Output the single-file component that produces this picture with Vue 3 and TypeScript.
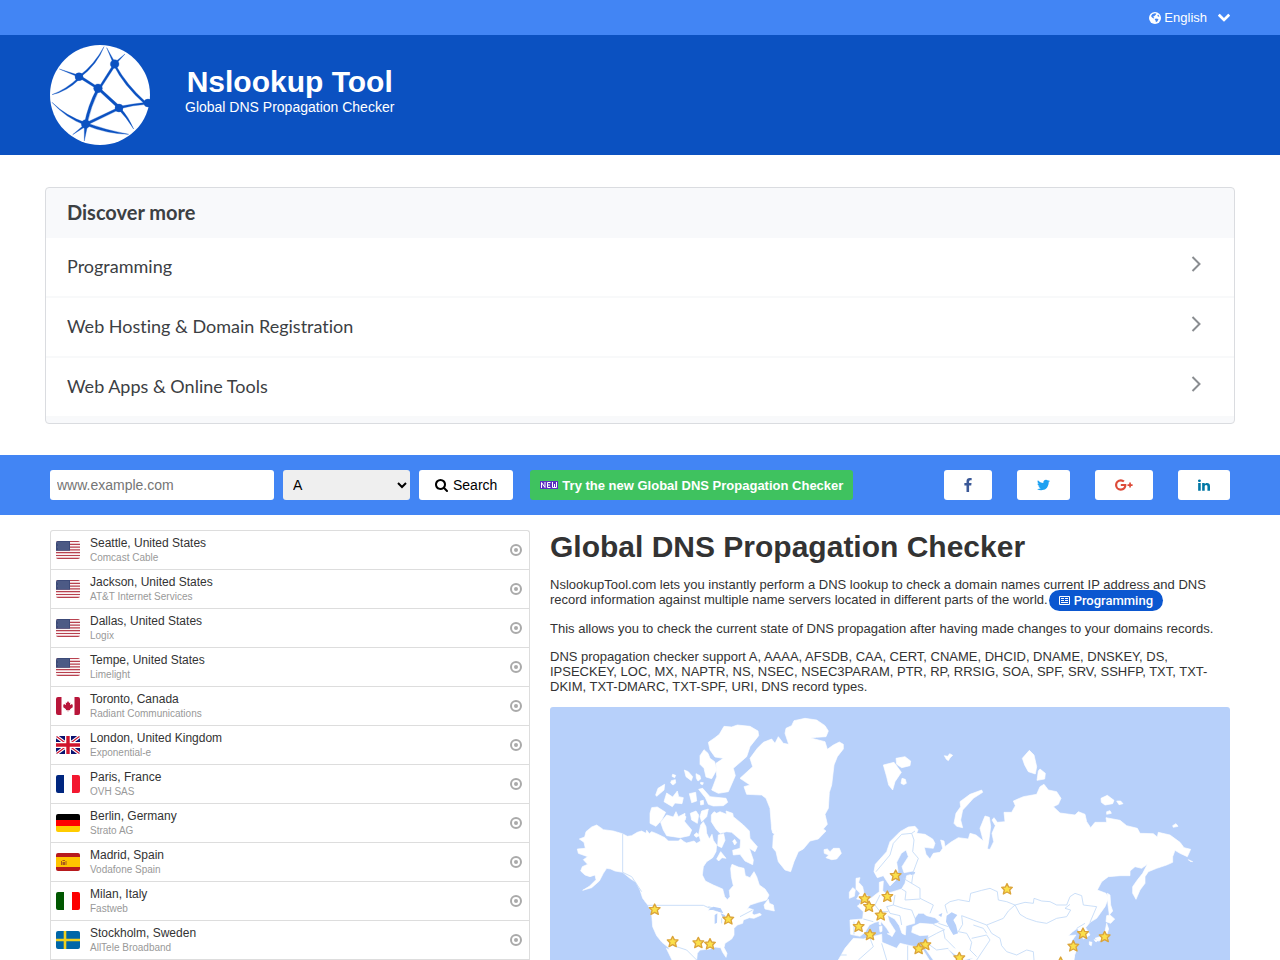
<script setup lang="ts">
import { ref } from 'vue'

interface Shape {
  d: string
  fill?: string
  stroke?: string
  width?: number
}
interface Server {
  city: string
  isp: string
  flag: string
}
interface Social {
  name: string
  color: string
  width: number
  box: string
  d: string
}

const domain = ref('')
const recordType = ref('A')
const recordTypes = ['A', 'AAAA', 'CAA', 'CNAME', 'MX', 'NS', 'PTR', 'SOA', 'SRV', 'TXT']
const topics = ['Programming', 'Web Hosting & Domain Registration', 'Web Apps & Online Tools']

const flags: Record<string, Shape[]> = {
  us: [
    { d: 'M0 0H24V18H0Z', fill: '#fbf3f4' },
    { d: 'M0 .5H24M0 3.300H24M0 6.100H24M0 8.900H24M0 11.700H24M0 14.500H24M0 17.300H24', stroke: '#b8414f', width: 1.2 },
    { d: 'M0 0H14V9.700H0Z', fill: '#3c4a78' },
    { d: 'M1 2H13M2 4H13M1 6H13M2 8H13', stroke: '#7481a6', width: 0.6 },
  ],
  ca: [
    { d: 'M0 0H24V18H0Z', fill: '#fff' },
    { d: 'M0 0H5.500V18H0ZM18.500 0H24V18H18.500Z', fill: '#b8163a' },
    { d: 'M12 4L13.200 6 14.300 5.500 13.900 8.300 15.500 7 16 7.800 17 7.600 16.500 9.300 17 10 14 12.300 14.200 13.200 12.300 12.900V14.500H11.700V12.900L9.800 13.200 10 12.300 7 10 7.500 9.300 7 7.600 8 7.800 8.500 7 10.100 8.300 9.700 5.500 10.800 6Z', fill: '#b8163a' },
  ],
  gb: [
    { d: 'M0 0H24V18H0Z', fill: '#0a1270' },
    { d: 'M0 0L24 18M24 0L0 18', stroke: '#fff', width: 3.4 },
    { d: 'M0 0L24 18M24 0L0 18', stroke: '#d0142c', width: 1.2 },
    { d: 'M12 0V18M0 9H24', stroke: '#fff', width: 6 },
    { d: 'M12 0V18M0 9H24', stroke: '#d0142c', width: 3.4 },
  ],
  fr: [
    { d: 'M0 0H8V18H0Z', fill: '#00267f' },
    { d: 'M8 0H16V18H8Z', fill: '#fff' },
    { d: 'M16 0H24V18H16Z', fill: '#f31830' },
  ],
  de: [
    { d: 'M0 0H24V6H0Z', fill: '#000' },
    { d: 'M0 6H24V12H0Z', fill: '#f00' },
    { d: 'M0 12H24V18H0Z', fill: '#fc0' },
  ],
  es: [
    { d: 'M0 0H24V18H0Z', fill: '#b71a1d' },
    { d: 'M0 4H24V14H0Z', fill: '#ffc400' },
    { d: 'M5 8h1v4H5zM9.500 8h1v4h-1zM6.500 7h2.500v1H6.500zM6.500 9h2.500v3H6.500z', fill: '#a8581c' },
  ],
  it: [
    { d: 'M0 0H8V18H0Z', fill: '#005700' },
    { d: 'M8 0H16V18H8Z', fill: '#fff' },
    { d: 'M16 0H24V18H16Z', fill: '#fc0000' },
  ],
  se: [
    { d: 'M0 0H24V18H0Z', fill: '#0066a8' },
    { d: 'M9 0V18M0 9H24', stroke: '#f0d020', width: 2.6 },
  ],
}

const servers: Server[] = [
  { city: 'Seattle, United States', isp: 'Comcast Cable', flag: 'us' },
  { city: 'Jackson, United States', isp: 'AT&T Internet Services', flag: 'us' },
  { city: 'Dallas, United States', isp: 'Logix', flag: 'us' },
  { city: 'Tempe, United States', isp: 'Limelight', flag: 'us' },
  { city: 'Toronto, Canada', isp: 'Radiant Communications', flag: 'ca' },
  { city: 'London, United Kingdom', isp: 'Exponential-e', flag: 'gb' },
  { city: 'Paris, France', isp: 'OVH SAS', flag: 'fr' },
  { city: 'Berlin, Germany', isp: 'Strato AG', flag: 'de' },
  { city: 'Madrid, Spain', isp: 'Vodafone Spain', flag: 'es' },
  { city: 'Milan, Italy', isp: 'Fastweb', flag: 'it' },
  { city: 'Stockholm, Sweden', isp: 'AllTele Broadband', flag: 'se' },
]

const socials: Social[] = [
  { name: 'Facebook', color: '#3b5998', width: 8, box: '479 0 864 1664', d: 'M1343 12v264h-157q-86 0-116 36t-30 108v189h293l-39 296h-254v759H734V905H479V609h255V391q0-186 104-288.500T1115 0q147 0 228 12z' },
  { name: 'Twitter', color: '#1da1f2', width: 13, box: '108 128 1576 1536', d: 'M1684 408q-67 98-162 167 1 14 1 42 0 130-38 259.500T1369.500 1125 1185 1335.500t-258 146-323 54.500q-271 0-496-145 35 4 78 4 225 0 401-138-105-2-188-64.500T285 1033q33 5 61 5 43 0 85-11-112-23-185.500-111.500T172 710v-4q68 38 146 41-66-44-105-115t-39-154q0-88 44-163 121 149 294.500 238.500T884 653q-8-38-8-74 0-134 94.500-228.500T1199 256q140 0 236 102 109-21 205-78-37 115-142 178 93-10 186-50z' },
  { name: 'Google Plus', color: '#dd4b39', width: 18, box: '0 0 18 12', d: 'M5.800 5V7.100H9.200C8.900 8.400 7.600 9.600 5.800 9.600A3.600 3.600 0 0 1 5.800 2.400C6.800 2.400 7.600 2.800 8.100 3.300L9.700 1.700A5.700 5.700 0 0 0 5.800 .2 5.800 5.800 0 0 0 5.800 11.800C9.200 11.800 11.400 9.400 11.400 6.100Q11.400 5.500 11.300 5ZM14.200 3.500V5.200H12.500V6.900H14.200V8.600H15.900V6.900H17.600V5.200H15.900V3.500Z' },
  { name: 'LinkedIn', color: '#0077a5', width: 12, box: '128 120 1536 1496', d: 'M477 625v991H147V625h330zm21-306q1 73-50.500 122T312 490h-2q-82 0-132-49t-50-122q0-74 51.500-122.500T314 148t133 48.500T498 319zm1166 729v568h-329v-530q0-105-40.500-164.500T1168 862q-63 0-105.500 34.500T999 982q-11 30-11 81v553H659q2-399 2-647t-1-296l-1-48h329v144h-2q20-32 41-56t56.500-52 87-43.500T1285 602q171 0 275 113.500t104 332.500z' },
]

const westLand: string[] = [
  // North America
  'M140 360L152 368 160 374 190 378 217 386 232 394 245 392 262 382 275 378 288 385 290 376 298 386 305 380 320 386 345 398 355 408 385 408 392 402 402 410 410 414 432 408 440 415 452 408 446 388 452 360 460 350 468 365 470 385 478 402 486 388 490 406 500 420 498 440 488 458 470 470 460 485 457 510 466 528 490 540 518 552 524 575 532 584 540 575 538 556 550 542 544 515 542 490 546 478 565 486 582 490 586 512 600 518 612 500 620 515 628 540 645 552 657 570 650 585 625 592 600 600 590 614 597 610 610 614 606 625 612 630 630 625 634 630 612 640 598 638 580 645 578 655 562 660 552 670 552 690 545 702 525 715 522 728 531 745 528 757 518 742 512 728 495 726 480 732 450 735 442 745 440 765H372L362 748 356 728 336 712 320 692 308 665 306 640 304 618 290 595 278 580 270 555 258 532 240 520 218 502 195 498 182 492 170 490 160 505 148 528 125 548 98 556 118 544 138 524 135 510 120 515 105 510 92 498 97 485 113 478 100 464 113 455 85 445 82 432 106 430 102 412 88 402 104 396 108 380 125 366Z',
  'M349 730L358 735 375 765H366Z',
  // Greenland
  'M705 85L708 70 725 62 732 47 765 40 800 45 825 62 835 78 828 95 800 97 782 99 825 110 832 133 850 120 868 111 880 118 880 132 862 155 852 180 845 240 838 262 835 310 825 328 832 358 820 372 828 378 805 402 780 408 760 432 745 440 732 470 722 500 705 495 685 470 678 440 668 428 670 392 680 378 665 372 660 310 648 280 635 270 590 268 582 245 600 240 570 220 608 185 600 160 622 130 640 112 665 102 675 115 685 95 700 115 716 118Z',
  'M665 372l14 4-2 12-9-4z',
  // Ellesmere and the Arctic islands
  'M475 112L495 98 508 88 522 64 545 66 562 60 600 64 624 78 626 92 600 125 590 155 550 190 556 212 535 260 505 265 485 255 500 215 498 175 520 160 495 156 480 135Z',
  'M462 134L474 145 480 160 494 170 500 195 485 221 468 216 462 190 450 178 450 152Z',
  'M446 253L458 250 465 258 480 275 528 280 533 292 520 302 490 303 475 298 466 278Z',
  'M403 195L415 200 428 215 424 227 408 215ZM438 206l12 6 2 10-8 6-5-8zM368 208l9 3-3 7-8-4zM364 227l12-3 1 10-8 6-7-6zM317 270L324 250 344 238 342 255 320 274ZM418 266L437 262 440 288 425 293ZM342 290L350 264 368 276 382 258 386 275 400 278 396 296 375 294 367 305ZM451 288l9-2 1 12-9 2zM452 232l8 1-2 6-6-2z',
  'M305 308L322 306 347 322 335 345 318 364 300 355 300 325Z',
  'M332 352L350 330 370 336 378 320 385 335 405 325 404 350 425 375 418 392 390 398 350 392 340 375Z',
  'M400 332l8 3-3 10zM421 325L438 318 446 330 442 355 425 345ZM455 318L475 312 470 335 455 350 450 335ZM432 390l8-7 8 9-10 5z',
  'M484 330L492 320 500 325 510 320 530 328 528 318 548 325 550 335 580 360 598 378 600 400 622 425 615 440 598 430 610 465 608 479 585 468 570 448 550 450 548 436 570 430 572 405 545 382 530 380 510 385 498 372 484 350Z',
  'M505 390l16-4 4 20-10 22-12-6zM500 462l12-22 16 20-12-2-10 10zM548 408l6-5 6 10-6 7z',
  // Newfoundland and Vancouver Island
  'M642 600L655 583 658 595 670 600 673 618 645 612ZM284 588l20 8 8 14-12-6z',
  // Iceland
  'M822 434L832 432 840 440 850 430 868 430 874 445 860 462 845 464 828 458 836 450 823 445Z',
  // Great Britain and Ireland
  'M918 520L930 518 926 532 938 545 942 565 962 580 958 595 925 602 938 585 920 582 930 565 918 552ZM898 562l10-14 8 6-3 20-15 6z',
]

const eastLand: string[] = [
  // Europe and Asia
  'M75 364L84 374 80 385 105 388 128 402 135 415 130 430 103 427 108 448 120 462 130 445 150 442 158 430 152 405 162 408 165 425 182 412 205 398 235 402 240 385 258 390 280 408 270 370 285 333 298 337 302 365 296 410 292 432 300 433 311 410 306 385 316 362 306 345 312 338 322 352 345 350 342 322 365 322 376 302 370 288 400 275 440 268 450 245 462 238 475 255 500 260 513 280 505 298 490 305 510 324 555 330 565 320 585 328 590 350 602 368 615 352 650 352 648 338 690 346 710 362 742 370 750 385 790 386 802 396 805 382 840 390 870 412 882 428 902 433 892 455 870 445 855 436 848 455 848 472 830 480 800 490 775 500 765 515 765 535 750 555 738 583 728 565 728 545 742 525 758 505 772 478 755 490 735 485 720 498 720 512 690 512 655 515 635 530 622 555 648 565 655 580 645 605 620 640 600 652 587 668 600 690 580 702 562 670 548 680 535 692 558 690 545 708 560 735 548 765H240L250 758 222 765 190 745 170 728 188 750 205 765H130L102 725 112 715 116 690 90 692 65 682 68 665 90 655 130 658 150 652 135 638 110 632 100 625 85 625 74 640 74 655 48 662 46 690 36 685 28 662 14 642-8 630-2 650 16 678 6 695-10 670-28 648-45 652-62 660-75 682-90 694-118 688-120 645-82 642-80 620-98 603-80 598-60 582-45 570-32 560-32 532-20 528-22 558-10 566 35 552 45 535 50 512 75 505 70 498 42 503 36 485 55 455 48 435 34 445 20 472 24 498 18 525 0 543-12 525-20 512-38 518-48 500-44 478-10 440 0 410 30 380 55 366Z',
  // Africa
  'M-155 765L-135 730-110 700-80 702-25 688-24 712 20 730 30 715 60 722 95 728 118 765Z',
  // Svalbard and the northern islands
  'M-20 180L12 172 34 202 15 230 8 255-4 240-10 215ZM18 160L45 155 62 168 60 182 35 188 20 178ZM36 220l10 3 3 12-8 4-8-4zM163 152l10 2 6-8 9 5-8 8-5 8-6-4z',
  'M192 355L198 325 212 305 210 290 240 268 275 255 278 262 250 280 232 300 218 315 212 345 218 368 200 364Z',
  'M397 160L418 136 432 150 440 185 436 207 415 200 404 180ZM445 198L450 192 466 205 464 222 441 226Z',
  'M633 280L652 271 672 286 668 296 645 300 634 292ZM680 288l12 0 7 8-12 3zM650 320l10-3 4 8-14 3zM848 362l10-6 6 8-14 3zM895 464l13 6-8-1z',
  // Sakhalin and Japan
  'M652 565L660 570 662 600 668 618 658 630 654 600ZM650 632L660 630 674 642 662 655 648 650ZM650 655L656 672 650 690 655 700 625 708 615 700 640 692 646 675ZM598 710l8 2-2 10-6-3zM612 704l12 2-6 5z',
  'M550 752l4 0-2 13h-5z',
  // Mediterranean islands
  'M-32 648l5 0-1 12-5-2zM-32 665l8-2 0 16-6 2zM-8 686l16 0-2 7z',
]

const water = [
  'M170 632L185 622 202 630 190 645 198 660 204 685 190 690 178 670 168 650Z',
  'M145 630l12-6-3 12z',
  'M62 504l14-4-3 8-11 2z',
]

const borders = [
  'M-802 386V502L-775 515-745 560M-730 601H-560L-535 612-520 618M-450 635L-412 615M-650 722L-610 735-580 765M-545 605L-520 612M-505 640V655',
  'M-42 500L0 450 10 415 35 388 65 385 75 378M65 385L72 405 68 440 85 460 70 500 65 535 90 550 90 580M40 520L65 535M35 552L48 560 45 585M90 580L130 600 120 625M45 585L90 582M15 570L10 600 40 610 65 615 75 640M10 600L-10 605 0 625 30 632 35 660M-30 570L-45 600-30 620-5 620M-80 642L-50 650M-108 650V688',
  'M180 590L165 600 172 625M180 590L205 584 238 590 242 565 275 556 300 550 322 560 325 585 350 590 375 600 355 618 340 640 290 660 250 645 215 632 218 658M375 600L405 592 430 595 432 580 455 588 480 590 500 600 530 600 540 575 555 565 575 572 580 600 620 605 600 652M375 600L390 628 410 640 440 650 470 655 500 640 530 635 542 615 525 610 540 598M290 660L305 685 330 700 335 722 350 740 380 750 410 735 430 740 432 765M218 658L205 680 230 685 245 712 240 735 260 755M250 660L280 670 290 685M245 700L290 690 300 705 280 735 260 765M160 675L165 700 195 730M130 658L165 675M145 655L175 665M112 700L140 685 160 675M112 715L140 735 175 730M100 725L112 715 115 700M560 670L585 655M-95 765L-50 725-60 700M53 722V765M-25 715L-10 765M-150 750H-130',
]

const stars = [
  [314, 613], [368, 710], [445, 713], [480, 717], [535, 642], [944, 581], [957, 604], [992, 630], [926, 664], [960, 689],
  [1012, 574], [1037, 511], [1371, 552], [1126, 719], [1106, 731], [1228, 758], [1570, 723], [1599, 685], [1664, 695], [1532, 772],
]
</script>

<template>
  <div class="page">
    <div class="topbar">
      <button type="button" class="language">
        <svg class="globe" viewBox="0 0 12 12" aria-hidden="true">
          <circle cx="6" cy="6" r="6" fill="#fff" />
          <path d="M6 1.200L7.500 1.800 6.500 3 5.200 4.200 4 4.800 5.500 6 4.800 6.600 3 5.500 2 4 3.500 2ZM9 2.500L10.500 4.200 9.300 4.800 8.300 3.800ZM6.800 6.600L9.500 7 8.500 9.300 6.900 10.300 6.600 8.600 5.600 7.600Z" fill="#4285f4" />
        </svg>
        <span>English</span>
        <svg class="chevron" viewBox="90 440 1612 1160" aria-hidden="true"><path fill="#fff" d="M1683 808l-742 741q-19 19-45 19t-45-19L109 808q-19-19-19-45.500t19-45.500l166-165q19-19 45-19t45 19l531 531 531-531q19-19 45-19t45 19l166 165q19 19 19 45.500t-19 45.500z" /></svg>
      </button>
    </div>

    <header class="header">
      <svg class="logo" viewBox="60 30 300 300" role="img" aria-label="Nslookup Tool">
        <circle cx="210" cy="180" r="150" fill="#fff" />
        <g fill="#0b51c1" stroke="#0b51c1">
          <path d="M222 35Q192 90 148 122L151 127Q202 88 222 35ZM88 102L147 121 145 126ZM66 179Q110 162 145 128L149 132Q110 170 66 179ZM150 121L204 156 201 162 147 128ZM207 156L250 88 256 92 210 163ZM230 38L250 86 256 84ZM285 57L253 83 257 88ZM257 90Q290 150 348 202L344 207Q280 150 252 92ZM207 157L270 214 265 221 202 163ZM201 160L208 163Q182 215 171 268L163 267Q174 210 201 160ZM269 214Q310 206 350 202V208Q310 210 269 221ZM264 221Q290 248 311 282 296 246 271 218ZM66 202Q110 245 168 263L166 271Q106 248 66 202ZM168 263L266 217 269 223 170 271ZM170 264Q230 286 296 298 228 296 168 271ZM166 266L128 299 172 271ZM163 268L163 318 173 269Z" />
          <circle cx="147" cy="125" r="12" /><circle cx="254" cy="87" r="13" /><circle cx="204" cy="160" r="13" />
          <circle cx="267" cy="219" r="12" /><circle cx="167" cy="267" r="13" /><circle cx="354" cy="204" r="12" />
        </g>
      </svg>
      <div class="brand">
        <div class="brand-name">Nslookup Tool</div>
        <div class="brand-sub">Global DNS Propagation Checker</div>
      </div>
    </header>

    <section class="discover">
      <h2>Discover more</h2>
      <a v-for="topic in topics" :key="topic" href="#">
        <span>{{ topic }}</span>
        <svg viewBox="0 0 10 16" aria-hidden="true"><path d="M1.500 1L8.500 8 1.500 15" fill="none" stroke="#8a8d91" stroke-width="2" /></svg>
      </a>
    </section>

    <form class="searchbar" @submit.prevent>
      <input v-model="domain" type="text" placeholder="www.example.com" aria-label="Domain name" />
      <select v-model="recordType" aria-label="Record type">
        <option v-for="type in recordTypes" :key="type">{{ type }}</option>
      </select>
      <button type="submit" class="search">
        <svg viewBox="64 128 1664 1664" aria-hidden="true"><path d="M1216 832q0-185-131.500-316.500T768 384 451.500 515.500 320 832t131.500 316.500T768 1280t316.500-131.500T1216 832zm512 832q0 52-38 90t-90 38q-54 0-90-38l-343-342q-179 124-399 124-143 0-273.500-55.500t-225-150-150-225T64 832t55.500-273.500 150-225 225-150T768 128t273.500 55.500 225 150 150 225T1472 832q0 220-124 399l343 343q37 37 37 90z" /></svg>
        <span>Search</span>
      </button>
      <a class="try" href="#">
        <svg viewBox="0 0 18 8" role="img" aria-label="New">
          <rect width="18" height="8" fill="#5b2fc0" />
          <path d="M1.500 7V1.500L5 6.500V1M10.500 1.500H7.500V6.500H10.500M7.500 4H10M12.500 1V6.500H16.500V1M14.500 3V6.500" fill="none" stroke="#fff" />
        </svg>
        <span>Try the new Global DNS Propagation Checker</span>
      </a>
      <nav class="socials" aria-label="Share">
        <a v-for="social in socials" :key="social.name" href="#" :aria-label="social.name">
          <svg :viewBox="social.box" :width="social.width" height="14" :fill="social.color"><path :d="social.d" /></svg>
        </a>
      </nav>
    </form>

    <main class="content">
      <ul class="servers">
        <li v-for="server in servers" :key="server.city">
          <svg class="flag" viewBox="0 0 24 18" aria-hidden="true">
            <path v-for="(shape, i) in flags[server.flag]" :key="i" :d="shape.d" :fill="shape.fill || 'none'" :stroke="shape.stroke" :stroke-width="shape.width" />
          </svg>
          <div class="server-text">
            <div class="city">{{ server.city }}</div>
            <div class="isp">{{ server.isp }}</div>
          </div>
          <svg class="target" viewBox="0 0 12 12" aria-hidden="true"><circle cx="6" cy="6" r="5" fill="none" stroke="#aaa" stroke-width="2" /><circle cx="6" cy="6" r="2" fill="#aaa" /></svg>
        </li>
      </ul>

      <article class="about">
        <h1>Global DNS Propagation Checker</h1>
        <p>
          NslookupTool.com lets you instantly perform a DNS lookup to check a domain names current IP address and DNS record information against multiple name servers located in different parts of the world.<a class="chip" href="#"><svg viewBox="0 0 11 9" aria-hidden="true"><path d="M.5 .5H10.500V8.500H.5ZM2 2.500H5M2 4.500H5M2 6.500H9M6 2.500H9M6 4.500H9" fill="none" stroke="#fff" /></svg>Programming</a>
        </p>
        <p>This allows you to check the current state of DNS propagation after having made changes to your domains records.</p>
        <p>DNS propagation checker support A, AAAA, AFSDB, CAA, CERT, CNAME, DHCID, DNAME, DNSKEY, DS, IPSECKEY, LOC, MX, NAPTR, NS, NSEC, NSEC3PARAM, PTR, RP, RRSIG, SOA, SPF, SRV, SSHFP, TXT, TXT-DKIM, TXT-DMARC, TXT-SPF, URI, DNS record types.</p>
        <svg class="map" viewBox="0 6 2040 759" role="img" aria-label="World map of name servers">
          <g fill="#fff">
            <path v-for="d in westLand" :key="d" :d="d" stroke="#fff" stroke-width="2" stroke-linejoin="round" />
          </g>
          <g transform="translate(1020 0)">
            <path v-for="d in eastLand" :key="d" :d="d" fill="#fff" stroke="#fff" stroke-width="2" stroke-linejoin="round" />
            <path v-for="d in water" :key="d" :d="d" fill="#b7d0fa" />
            <path v-for="d in borders" :key="d" :d="d" fill="none" stroke="#c0d8f6" stroke-width="2.500" stroke-linejoin="round" />
          </g>
          <path d="M474 616L490 605 512 610 520 625 505 620 492 614ZM494 630l8-5-1 28-7 4zM512 625l14 6-6 12z" fill="#b7d0fa" />
          <path v-for="([x, y], i) in stars" :key="i" :transform="`translate(${x} ${y})`" d="M0-16L5-6 16-5 8 3 11 15 0 9-11 15-8 3-16-5-5-6Z" fill="#fbe04b" stroke="#dba43a" stroke-width="4" stroke-linejoin="round" />
        </svg>
      </article>
    </main>
  </div>
</template>

<style>
body {
  margin: 0;
  background: #fff;
}
</style>

<style scoped>
.page {
  font-family: "Liberation Sans", Arial, sans-serif;
  font-size: 13px;
  line-height: 15px;
  color: #333;
}
.page * {
  box-sizing: border-box;
}
svg {
  flex: none;
}
.topbar {
  display: flex;
  align-items: center;
  justify-content: flex-end;
  height: 35px;
  padding: 0 50px;
  background: #4285f4;
}
.language {
  display: flex;
  align-items: center;
  padding: 0;
  border: 0;
  background: none;
  color: #fff;
  font: inherit;
}
.globe {
  width: 12px;
  height: 12px;
  margin-right: 3px;
}
.chevron {
  width: 12px;
  height: 9px;
  margin-left: 11px;
}
.header {
  display: flex;
  align-items: flex-start;
  gap: 35px;
  height: 120px;
  padding: 10px 50px;
  background: #0b51c1;
  color: #fff;
  text-align: center;
}
.logo {
  width: 100px;
  height: 100px;
}
.brand {
  padding-top: 20px;
}
.brand-name {
  font-size: 30px;
  line-height: 34px;
  font-weight: bold;
}
.brand-sub {
  font-size: 14px;
  line-height: 16px;
}
.discover {
  margin: 32px 45px 31px;
  padding-bottom: 5px;
  border: 1px solid #dadce0;
  border-radius: 4px;
  background: #f8f9fb;
  font-family: Lato, sans-serif;
  font-variant-ligatures: none;
  color: #3c4043;
}
.discover h2 {
  margin: 0;
  padding: 0 21px 2px;
  font-size: 20px;
  line-height: 48px;
}
.discover a {
  display: flex;
  align-items: center;
  justify-content: space-between;
  height: 60px;
  padding: 0 33px 2px 21px;
  border-bottom: 2px solid #f8f9fa;
  background: #fff;
  color: inherit;
  font-size: 18px;
  line-height: 24px;
  text-decoration: none;
}
.discover a svg {
  width: 10px;
  height: 16px;
  margin-bottom: 4px;
}
.searchbar {
  display: flex;
  align-items: center;
  gap: 9px;
  min-height: 60px;
  padding: 0 50px;
  background: #4285f4;
}
.searchbar input,
.searchbar select,
.search,
.try,
.socials a {
  height: 30px;
  border: 0;
  border-radius: 3px;
}
.searchbar input {
  width: 224px;
  padding: 0 7px;
  background: #fff;
  font: 14px "Liberation Sans", Arial, sans-serif;
}
.searchbar input::placeholder {
  color: #757575;
}
.searchbar select {
  width: 127px;
  padding: 0 6px;
  background: #efefef;
  color: #000;
  font: 14px "Liberation Sans", Arial, sans-serif;
}
.search {
  display: flex;
  align-items: center;
  gap: 5px;
  padding: 0 16px;
  background: #fff;
  color: #000;
  font: 14px "Liberation Sans", Arial, sans-serif;
}
.search svg {
  width: 13px;
  height: 13px;
}
.try {
  display: flex;
  align-items: center;
  gap: 4px;
  margin-left: 8px;
  padding: 0 10px;
  background: #3fc25f;
  color: #fff;
  font-weight: bold;
  text-decoration: none;
  white-space: nowrap;
}
.try svg {
  width: 18px;
  height: 8px;
}
.socials {
  display: flex;
  gap: 25px;
  margin-left: auto;
}
.socials a {
  display: flex;
  align-items: center;
  padding: 0 20px;
  background: #fff;
}
.content {
  display: grid;
  grid-template-columns: minmax(0, 12fr) minmax(0, 17fr);
  gap: 20px;
  align-items: start;
  padding: 15px 50px 0;
}
.servers {
  margin: 0;
  padding: 0;
  border: 1px solid #ddd;
  border-bottom: 0;
  border-radius: 3px 3px 0 0;
  list-style: none;
}
.servers li {
  display: flex;
  align-items: center;
  gap: 10px;
  height: 39px;
  padding: 0 7px 0 5px;
  border-bottom: 1px solid #ddd;
}
.flag {
  width: 24px;
  height: 18px;
  border-radius: 2px;
}
.server-text {
  flex: 1;
  padding-top: 1px;
}
.city {
  font-size: 12px;
  line-height: 15px;
}
.isp {
  color: #999;
  font-size: 10px;
  line-height: 14px;
}
.target {
  width: 12px;
  height: 12px;
}
.about h1 {
  margin: 0 0 13px;
  font-size: 30px;
  line-height: 34px;
}
.about p {
  margin: 0 0 13px;
}
.chip {
  display: inline-flex;
  align-items: center;
  gap: 4px;
  height: 21px;
  margin: -3px 0 -3px 1px;
  padding: 0 10px;
  border-radius: 11px;
  background: #0b57d0;
  color: #fff;
  font: 500 13px Roboto, sans-serif;
  text-decoration: none;
  vertical-align: middle;
}
.chip svg {
  width: 11px;
  height: 9px;
}
.map {
  display: block;
  width: 100%;
  height: auto;
  border-radius: 3px 3px 0 0;
  background: #b7d0fa;
}
</style>
